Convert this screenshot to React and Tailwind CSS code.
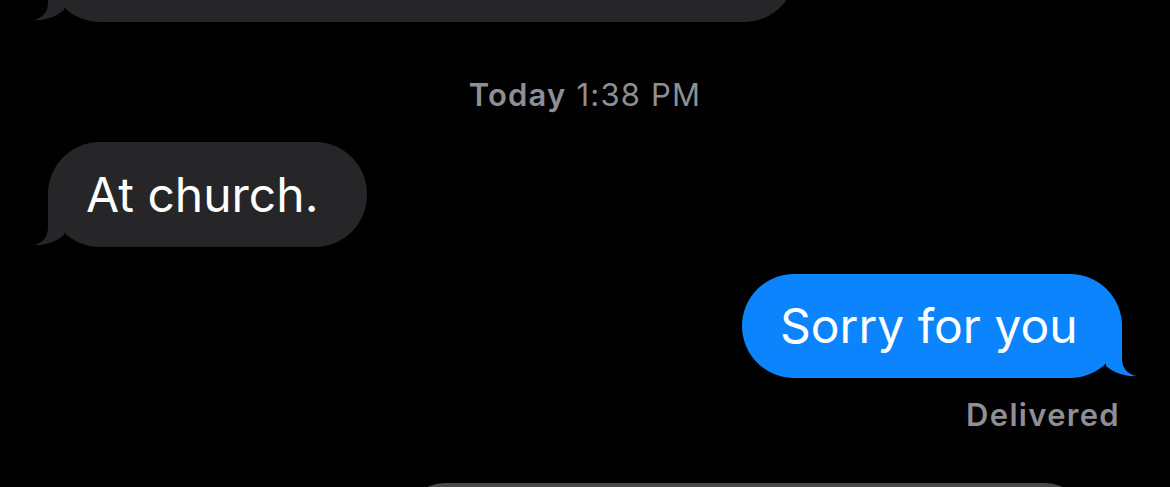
import React from 'react';

const FONT = 'font-["Inter","Liberation_Sans",sans-serif]';

function Tail({ color, flip = false }) {
  return (
    <svg
      width="40"
      height="56"
      viewBox="0 0 40 56"
      className={`absolute bottom-0 ${flip ? '-right-4 -scale-x-100' : '-left-4'}`}
    >
      <path d="M16 0 L16 37 C16 47 9 53 1 54 C12 55 24 51 32 44 L32 0 Z" fill={color} />
    </svg>
  );
}

function Bubble({ children, side = 'left', className = '' }) {
  const isMe = side === 'right';
  const color = isMe ? '#0b84fe' : '#262629';
  return (
    <div
      className={`relative flex items-center rounded-[52px] text-white text-[48px] pl-[38px] ${
        isMe ? 'bg-[#0b84fe]' : 'bg-[#262629]'
      } ${className}`}
    >
      <Tail color={color} flip={isMe} />
      <span className="relative leading-none">{children}</span>
    </div>
  );
}

export default function App() {
  return (
    <div className={`w-[1170px] h-[487px] overflow-hidden bg-black ${FONT}`}>
      <div className="flex flex-col">
        <div className="pl-[48px] -mt-[83px]">
          <Bubble className="w-[748px] h-[105px]"> </Bubble>
        </div>

        <div className="mt-[55px] text-center text-[31px] leading-[36px] tracking-[1.2px] text-[#8e8e93]">
          <span className="font-semibold">Today</span> 1:38 PM
        </div>

        <div className="pl-[48px] mt-[29px]">
          <Bubble className="w-[319px] h-[105px]">At church.</Bubble>
        </div>

        <div className="flex justify-end pr-[48px] mt-[27px]">
          <Bubble side="right" className="w-[380px] h-[104px]">Sorry for you</Bubble>
        </div>

        <div className="flex justify-end pr-[50px] mt-[20px] text-[31px] leading-[34px] tracking-[1.3px] font-semibold text-[#8e8e93]">
          Delivered
        </div>

        <div className="flex justify-end pr-[85px] mt-[51px]">
          <div className="w-[680px] h-[40px] rounded-t-[40px] bg-[#4a4a4c]" />
        </div>
      </div>
    </div>
  );
}
